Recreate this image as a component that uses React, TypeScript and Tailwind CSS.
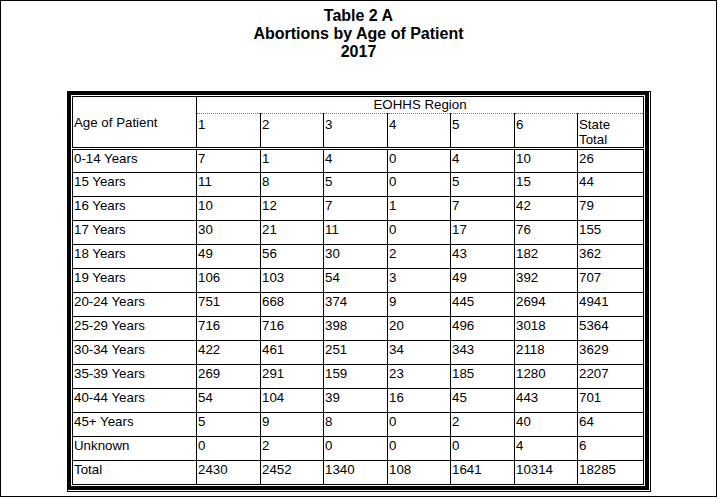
const regions = ["1", "2", "3", "4", "5", "6"];

const rows: [string, number[]][] = [
  ["0-14 Years", [7, 1, 4, 0, 4, 10, 26]],
  ["15 Years", [11, 8, 5, 0, 5, 15, 44]],
  ["16 Years", [10, 12, 7, 1, 7, 42, 79]],
  ["17 Years", [30, 21, 11, 0, 17, 76, 155]],
  ["18 Years", [49, 56, 30, 2, 43, 182, 362]],
  ["19 Years", [106, 103, 54, 3, 49, 392, 707]],
  ["20-24 Years", [751, 668, 374, 9, 445, 2694, 4941]],
  ["25-29 Years", [716, 716, 398, 20, 496, 3018, 5364]],
  ["30-34 Years", [422, 461, 251, 34, 343, 2118, 3629]],
  ["35-39 Years", [269, 291, 159, 23, 185, 1280, 2207]],
  ["40-44 Years", [54, 104, 39, 16, 45, 443, 701]],
  ["45+ Years", [5, 9, 8, 0, 2, 40, 64]],
  ["Unknown", [0, 2, 0, 0, 0, 4, 6]],
  ["Total", [2430, 2452, 1340, 108, 1641, 10314, 18285]],
];

const colWidths = ["w-[124px]", "w-[64px]", "w-[63px]", "w-[64px]", "w-[63px]", "w-[64px]", "w-[63px]", "w-[66px]"];

export default function App() {
  return (
    <div className="w-[717px] h-[497px] border border-black bg-white text-black font-['Liberation_Sans',Arial,sans-serif]">
      <div className="pt-[6px] text-center text-[16px] font-bold leading-[18px]">
        <div>Table 2 A</div>
        <div>Abortions by Age of Patient</div>
        <div>2017</div>
      </div>

      <div className="mt-[30px] pl-[66px] flex">
        <div className="border border-black pr-px pb-px">
          <div className="border-t-[3px] border-l-[3px] border-r-4 border-b-4 border-black p-px">
            <table className="w-[572px] table-fixed border-collapse text-[13.3px] leading-[15px]">
              <colgroup>
                {colWidths.map((w, i) => (
                  <col key={i} className={w} />
                ))}
              </colgroup>
              <thead>
                <tr>
                  <th
                    rowSpan={2}
                    className="border border-black border-b-[3px] [border-bottom-style:double]! align-middle text-left font-normal pl-px"
                  >
                    Age of Patient
                  </th>
                  <th
                    colSpan={7}
                    className="h-[17px] border-t border-r border-black border-b border-b-gray-500 [border-bottom-style:dotted]! align-top text-center font-normal p-0"
                  >
                    EOHHS Region
                  </th>
                </tr>
                <tr>
                  {[...regions, "State Total"].map((r) => (
                    <th
                      key={r}
                      className="h-[34px] border-l border-r border-black border-b-[3px] [border-bottom-style:double]! align-top text-left font-normal pt-[3px] pl-px"
                    >
                      {r === "State Total" ? (
                        <>
                          State
                          <br />
                          Total
                        </>
                      ) : (
                        r
                      )}
                    </th>
                  ))}
                </tr>
              </thead>
              <tbody>
                {rows.map(([label, vals]) => (
                  <tr key={label}>
                    <td className="h-[24px] border border-black align-top pt-px pl-px whitespace-nowrap">
                      {label}
                    </td>
                    {vals.map((v, i) => (
                      <td key={i} className="h-[24px] border border-black align-top pt-px pl-px">
                        {v}
                      </td>
                    ))}
                  </tr>
                ))}
              </tbody>
            </table>
          </div>
        </div>
      </div>
    </div>
  );
}
